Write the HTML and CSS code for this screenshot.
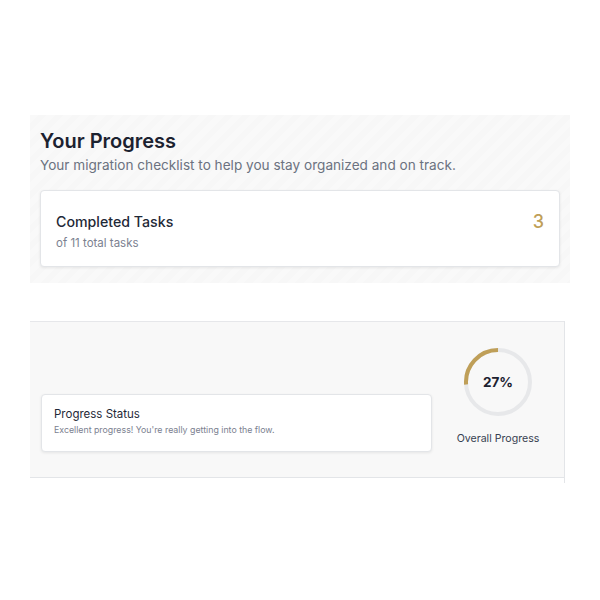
FILE: index.html
```html
<!DOCTYPE html>
<html lang="en">
<head>
    <meta charset="UTF-8">
    <meta name="viewport" content="width=device-width, initial-scale=1.0">
    <title>Your Progress</title>
    <link rel="stylesheet" href="styles.css">
</head>
<body>
    <div class="page">
        <section class="summary">
            <h1>Your Progress</h1>
            <p class="lead">Your migration checklist to help you stay organized and on track.</p>

            <div class="card tasks">
                <div class="tasks-info">
                    <div class="tasks-title">Completed Tasks</div>
                    <div class="tasks-sub">of 11 total tasks</div>
                </div>
                <div class="tasks-count">3</div>
            </div>
        </section>

        <div class="status-wrap">
            <section class="status">
                <div class="card status-card">
                    <div class="status-title">Progress Status</div>
                    <div class="status-text">Excellent progress! You're really getting into the flow.</div>
                </div>

                <div class="overall">
                    <div class="ring">
                        <svg width="70" height="70" viewBox="0 0 70 70">
                            <circle cx="35" cy="35" r="32" fill="none" stroke="#e7e8ea" stroke-width="4"/>
                            <!-- 27% arc, running anticlockwise from the top -->
                            <path d="M35 3 A32 32 0 0 0 3.1 37.5" fill="none" stroke="#bf9f58" stroke-width="4"/>
                        </svg>
                        <span class="ring-value">27%</span>
                    </div>
                    <div class="overall-label">Overall Progress</div>
                </div>
            </section>
        </div>
    </div>
</body>
</html>
```

FILE: styles.css
```css
body {
    margin: 0;
    background: white;
    font-family: Inter, "Noto Sans", sans-serif;
    color: #1f2937;
}
.page {
    padding-top: 115px;
}
.summary {
    margin: 0 30px;
    padding: 13px 10px 16px;
    background: repeating-linear-gradient(135deg, #f9f9f9 0 6px, #f7f7f7 6px 12px);
}
h1 {
    margin: 0;
    font-size: 20px;
    font-weight: 600;
    line-height: 26px;
    color: #1c2230;
}
.lead {
    margin: 1px 0 0;
    font-size: 13.6px;
    line-height: 20px;
    color: #6b7280;
}
.card {
    background: white;
    border: 1px solid #e3e5e8;
    border-radius: 4px;
    box-shadow: 0 1px 3px rgba(0,0,0,0.08);
}
.tasks {
    margin-top: 15px;
    height: 77px;
    box-sizing: border-box;
    padding: 0 15px;
    display: flex;
    align-items: center;
    justify-content: space-between;
}
.tasks-info {
    padding-top: 5px;
}
.tasks-title {
    font-size: 14.2px;
    font-weight: 500;
    line-height: 20px;
    color: #1f2937;
}
.tasks-sub {
    margin-top: 3px;
    font-size: 11.5px;
    line-height: 16px;
    color: #7b8190;
}
.tasks-count {
    margin-top: -14px;
    font-size: 18px;
    font-weight: 500;
    color: #bf9f58;
}
.status-wrap {
    margin: 38px 0 0 30px;
    width: 534px;
    height: 162px;
    border-right: 1px solid #e3e5e8;
}
.status {
    height: 157px;
    box-sizing: border-box;
    background: #f8f8f8;
    border-top: 1px solid #e6e7ea;
    border-bottom: 1px solid #e3e5e8;
    display: flex;
    padding: 25px 0 0 11px;
}
.status-card {
    width: 391px;
    height: 58px;
    box-sizing: border-box;
    margin-top: 47px;
    padding: 11px 12px;
}
.status-title {
    font-size: 11.5px;
    font-weight: 400;
    line-height: 16px;
    color: #1f2937;
}
.status-text {
    margin-top: 1px;
    font-size: 8.8px;
    line-height: 13px;
    color: #7b8190;
}
.overall {
    flex: 1;
    display: flex;
    flex-direction: column;
    align-items: center;
}
.ring {
    position: relative;
    width: 70px;
    height: 70px;
}
.ring svg {
    display: block;
}
.ring-value {
    position: absolute;
    inset: 0;
    display: flex;
    align-items: center;
    justify-content: center;
    font-size: 13.5px;
    font-weight: 700;
    color: #1c2230;
}
.overall-label {
    margin-top: 14px;
    font-size: 10.6px;
    line-height: 16px;
    color: #374151;
}
```
